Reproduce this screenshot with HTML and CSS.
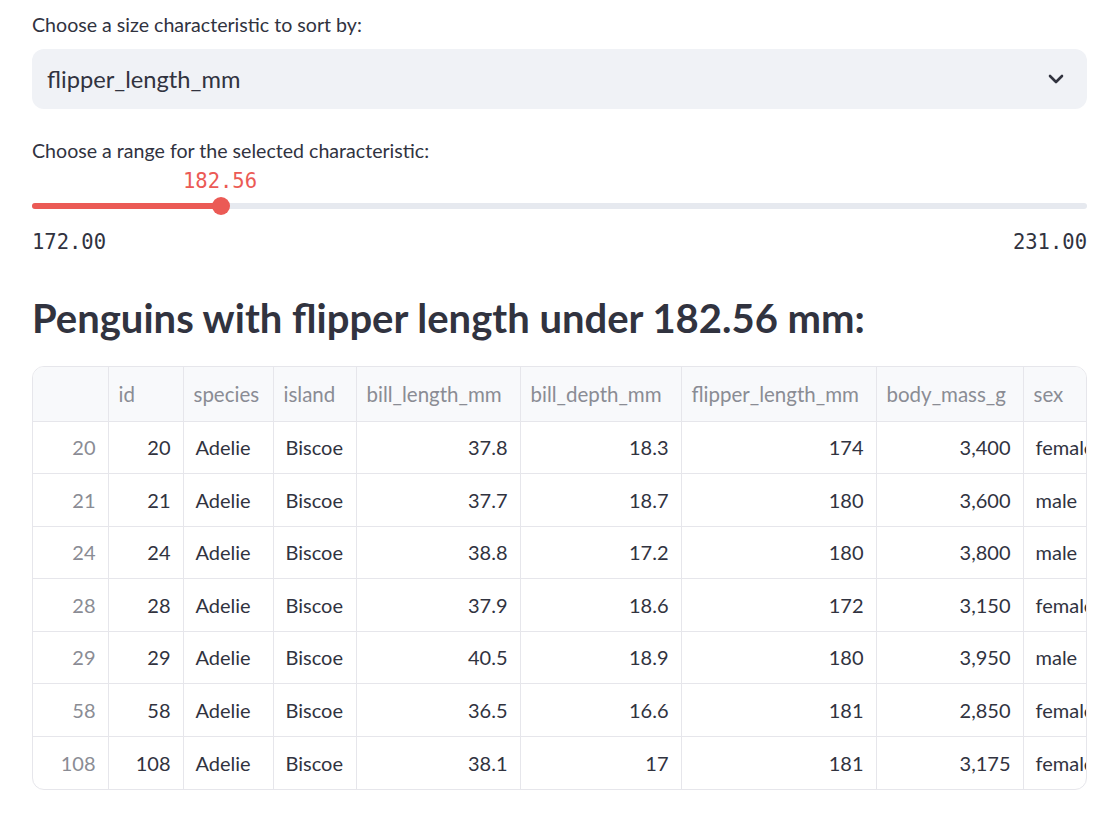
FILE: index.html
```html
<!DOCTYPE html>
<html>
<head>
<meta charset="utf-8">
<link rel="stylesheet" href="styles.css">
</head>
<body>
<main class="app">
  <section class="widget">
    <label class="label">Choose a size characteristic to sort by:</label>
    <div class="select">
      <span class="select-value">flipper_length_mm</span>
      <svg class="chevron" width="16" height="10" viewBox="0 0 16 10"><path d="M2 2 L8 8 L14 2" fill="none" stroke="#31333F" stroke-width="2.6" stroke-linecap="round" stroke-linejoin="round"/></svg>
    </div>
  </section>

  <section class="widget slider-widget">
    <label class="label">Choose a range for the selected characteristic:</label>
    <div class="slider">
      <div class="thumb-value-row"><span class="thumb-value" style="margin-left: 151px">182.56</span></div>
      <div class="track">
        <div class="track-fill" style="width: 189px"></div>
        <div class="thumb"></div>
      </div>
      <div class="ticks"><span>172.00</span><span>231.00</span></div>
    </div>
  </section>

  <h3 class="heading">Penguins with flipper length under 182.56 mm:</h3>

  <div class="grid-wrap">
    <table class="grid">
      <colgroup>
        <col class="c-idx"><col class="c-id"><col class="c-species"><col class="c-island"><col class="c-bl"><col class="c-bd"><col class="c-fl"><col class="c-bm"><col class="c-sex">
      </colgroup>
      <thead>
        <tr><th></th><th>id</th><th>species</th><th>island</th><th>bill_length_mm</th><th>bill_depth_mm</th><th>flipper_length_mm</th><th>body_mass_g</th><th>sex</th></tr>
      </thead>
      <tbody>
        <tr><td class="idx">20</td><td class="num">20</td><td>Adelie</td><td>Biscoe</td><td class="num">37.8</td><td class="num">18.3</td><td class="num">174</td><td class="num">3,400</td><td>female</td></tr>
        <tr><td class="idx">21</td><td class="num">21</td><td>Adelie</td><td>Biscoe</td><td class="num">37.7</td><td class="num">18.7</td><td class="num">180</td><td class="num">3,600</td><td>male</td></tr>
        <tr><td class="idx">24</td><td class="num">24</td><td>Adelie</td><td>Biscoe</td><td class="num">38.8</td><td class="num">17.2</td><td class="num">180</td><td class="num">3,800</td><td>male</td></tr>
        <tr><td class="idx">28</td><td class="num">28</td><td>Adelie</td><td>Biscoe</td><td class="num">37.9</td><td class="num">18.6</td><td class="num">172</td><td class="num">3,150</td><td>female</td></tr>
        <tr><td class="idx">29</td><td class="num">29</td><td>Adelie</td><td>Biscoe</td><td class="num">40.5</td><td class="num">18.9</td><td class="num">180</td><td class="num">3,950</td><td>male</td></tr>
        <tr><td class="idx">58</td><td class="num">58</td><td>Adelie</td><td>Biscoe</td><td class="num">36.5</td><td class="num">16.6</td><td class="num">181</td><td class="num">2,850</td><td>female</td></tr>
        <tr><td class="idx">108</td><td class="num">108</td><td>Adelie</td><td>Biscoe</td><td class="num">38.1</td><td class="num">17</td><td class="num">181</td><td class="num">3,175</td><td>female</td></tr>
      </tbody>
    </table>
  </div>
</main>
</body>
</html>
```

FILE: styles.css
```css
html, body {
  margin: 0;
  padding: 0;
  background: #ffffff;
}

body {
  font-family: Lato, "Noto Sans", sans-serif;
  color: #31333F;
}

.app {
  width: 1055px;
  padding: 12px 0 0 32px;
  display: flex;
  flex-direction: column;
}

.label {
  display: block;
  font-size: 19.6px;
  line-height: 26px;
  color: #31333F;
}

.widget {
  display: flex;
  flex-direction: column;
}

.select {
  margin-top: 11px;
  height: 60px;
  background: #F0F2F6;
  border-radius: 12px;
  display: flex;
  align-items: center;
  justify-content: space-between;
  padding: 0 23px 0 15px;
}

.select-value {
  font-size: 23.7px;
}

.chevron {
  display: block;
}

.slider-widget {
  margin-top: 29px;
}

.slider {
  display: flex;
  flex-direction: column;
}

.thumb-value-row {
  height: 26px;
  margin-top: 4px;
  display: flex;
}

.thumb-value {
  font-family: "DejaVu Sans Mono", monospace;
  font-size: 20.5px;
  line-height: 26px;
  color: #EB5A55;
}

.track {
  margin-top: 9px;
  height: 6px;
  border-radius: 3px;
  background: #E6E9EF;
  position: relative;
}

.track-fill {
  height: 6px;
  border-radius: 3px;
  background: #EB5A55;
}

.thumb {
  position: absolute;
  left: 180px;
  top: -6px;
  width: 18px;
  height: 18px;
  border-radius: 50%;
  background: #EB5A55;
}

.ticks {
  margin-top: 20px;
  display: flex;
  justify-content: space-between;
  font-family: "DejaVu Sans Mono", monospace;
  font-size: 20.5px;
  line-height: 26px;
  color: #31333F;
}

.heading {
  margin: 38px 0 0 0;
  font-size: 40px;
  line-height: 50px;
  font-weight: 700;
  color: #31333F;
}

.grid-wrap {
  margin-top: 23px;
  border: 1px solid #E6E6EB;
  border-radius: 12px;
  overflow: hidden;
  width: 1053px;
}

.grid {
  border-collapse: collapse;
  table-layout: fixed;
  width: 1099px;
  font-size: 20px;
}

.c-idx { width: 75px; }
.c-id { width: 75px; }
.c-species { width: 90px; }
.c-island { width: 83px; }
.c-bl { width: 164px; }
.c-bd { width: 161px; }
.c-fl { width: 195px; }
.c-bm { width: 147px; }
.c-sex { width: 109px; }

.grid th {
  height: 54px;
  box-sizing: border-box;
  background: #F8F9FB;
  color: #8A8C94;
  font-weight: 400;
  font-size: 20.5px;
  text-align: left;
  padding: 0 10px;
  border-left: 1px solid #E6E6EB;
  border-bottom: 1px solid #E6E6EB;
  white-space: nowrap;
  overflow: hidden;
}

.grid td {
  height: 52.5px;
  box-sizing: border-box;
  padding: 0 12px;
  border-left: 1px solid #E6E6EB;
  border-top: 1px solid #E6E6EB;
  white-space: nowrap;
  overflow: hidden;
  color: #31333F;
}

.grid th:first-child,
.grid td:first-child {
  border-left: none;
}

.grid tbody tr:first-child td {
  border-top: none;
}

.grid td.num {
  text-align: right;
}

.grid td.idx {
  text-align: right;
  color: #8A8C94;
}
```
